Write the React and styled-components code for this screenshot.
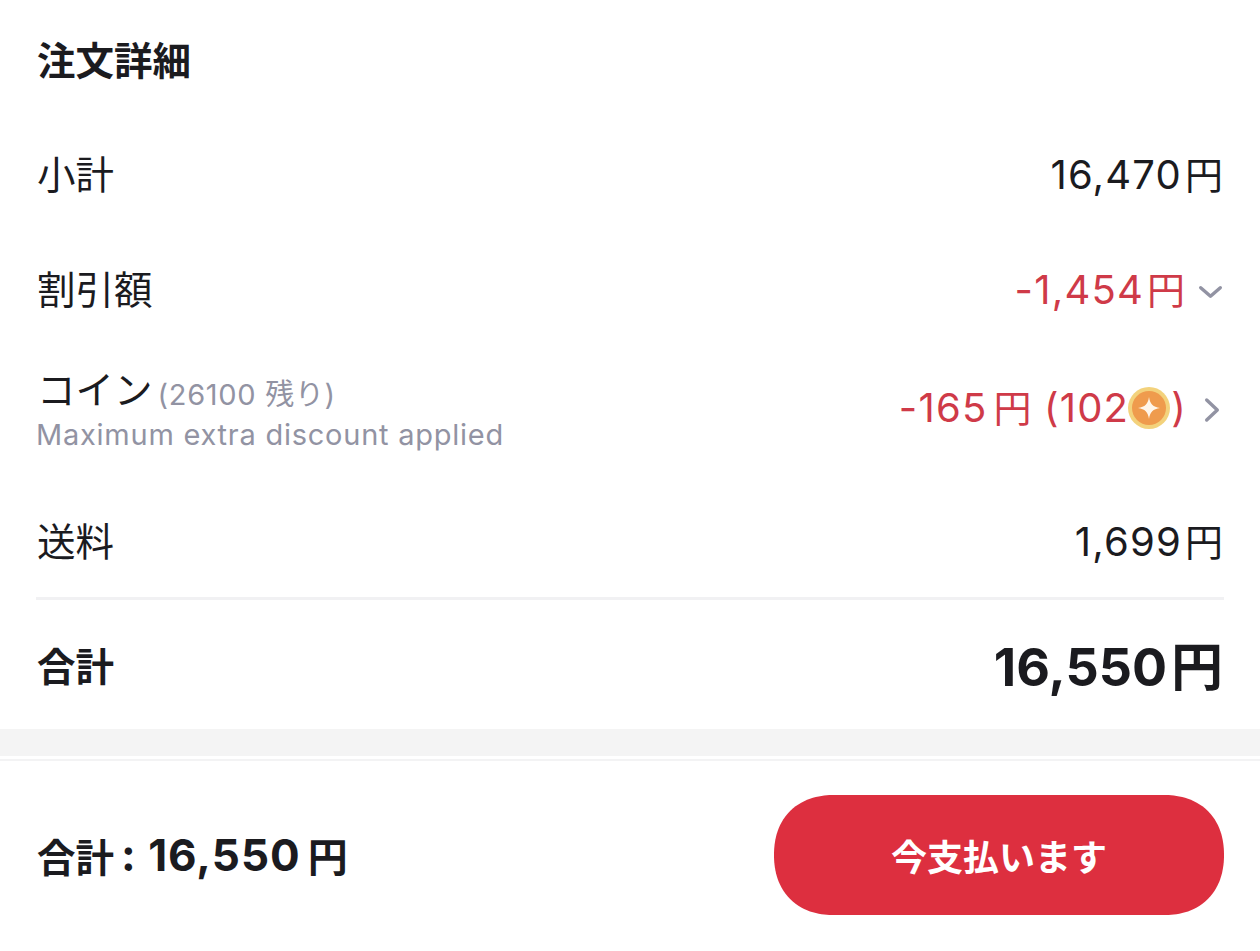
import React from 'react';
import styled, { createGlobalStyle } from 'styled-components';

const GlobalStyle = createGlobalStyle`
  html, body {
    margin: 0;
    padding: 0;
    background: #fff;
  }
  body {
    font-family: "Inter", "Noto Sans CJK JP", sans-serif;
    color: #1b1b1f;
  }
`;

const Page = styled.div`
  width: 1260px;
  height: 951px;
  overflow: hidden;
  display: flex;
  flex-direction: column;
`;

const Details = styled.section`
  height: 729px;
  padding: 0 36px;
  box-sizing: border-box;
  display: flex;
  flex-direction: column;
`;

const Title = styled.h2`
  margin: 0;
  height: 120px;
  box-sizing: border-box;
  padding: 0 0 4px 1px;
  display: flex;
  align-items: center;
  font-size: 38.5px;
  font-weight: 700;
`;

const Row = styled.div`
  height: ${({ $h }) => $h}px;
  flex: none;
  display: flex;
  align-items: center;
  justify-content: space-between;
`;

const CoinRow = styled(Row)`
  align-items: flex-start;
`;

const Label = styled.span`
  font-size: 38.5px;
  line-height: 46px;
  font-weight: 400;
  margin-bottom: 4px;
  padding-left: 1px;
`;

const Amount = styled.span`
  display: flex;
  align-items: center;
  font-size: 40px;
  line-height: 46px;
  letter-spacing: 1.2px;
  font-weight: 400;
  margin-bottom: 3px;
  color: ${({ $red }) => ($red ? '#cf3a48' : '#1b1b1f')};
  padding-right: 1px;
`;

const Yen = styled.span`
  margin-left: ${({ $gap }) => $gap ?? 3}px;
  font-size: ${({ $size }) => $size ?? 38}px;
  letter-spacing: 0;
`;

const Side = styled.span`
  display: flex;
  align-items: center;
`;

const CoinSide = styled(Side)`
  margin-top: 35px;
`;

const ChevronBox = styled.svg`
  width: 30px;
  height: 30px;
  flex: none;
  margin-left: ${({ $gap }) => $gap}px;
  fill: none;
  stroke: #9293a3;
  stroke-width: 3.4;
  stroke-linecap: round;
  stroke-linejoin: round;
`;

const CoinLabel = styled.div`
  margin-top: 17px;
  display: flex;
  flex-direction: column;
`;

const CoinTop = styled.div`
  display: flex;
  align-items: flex-start;
  height: 51px;
`;

const Balance = styled.span`
  margin: 5px 0 0 5px;
  font-size: 29px;
  line-height: 46px;
  letter-spacing: 0.7px;
  color: #9293a3;
`;

const Hint = styled.div`
  font-size: 29px;
  line-height: 34px;
  letter-spacing: 0.75px;
  color: #9293a3;
`;

const CoinIcon = styled.svg`
  width: 42px;
  height: 42px;
  flex: none;
  margin: 0 1px 0 -1px;
`;

const Divider = styled.div`
  height: 3px;
  flex: none;
  background: #f1f1f3;
`;

const TotalLabel = styled(Label)`
  font-weight: 700;
  margin: 4px 0 0;
`;

const TotalAmount = styled(Amount)`
  font-size: 52px;
  letter-spacing: 0;
  font-weight: 700;
  margin: 6px 0 0;
`;

const Band = styled.div`
  height: 27px;
  flex: none;
  background: #f4f4f4;
`;

const Footer = styled.footer`
  margin-top: 3px;
  border-top: 2px solid #f3f3f4;
  flex: 1;
  padding: 34px 36px 0 37px;
  display: flex;
  align-items: flex-start;
  justify-content: space-between;
`;

const FooterTotal = styled.div`
  height: 120px;
  display: flex;
  align-items: center;
  font-size: 44px;
  letter-spacing: 1px;
  font-weight: 700;
`;

const FooterLabel = styled.span`
  font-size: 38.5px;
  letter-spacing: 0;
  margin-right: 7px;
`;

const PayButton = styled.button`
  width: 450px;
  height: 120px;
  border: 0;
  padding: 0;
  background: #dd2f3f;
  border-radius: 60px;
  corner-shape: superellipse(1.15);
  color: #fff;
  font-family: inherit;
  font-size: 36px;
  font-weight: 700;
`;

function Chevron({ down, gap = 8 }) {
  return (
    <ChevronBox viewBox="0 0 30 30" $gap={gap}>
      {down ? <path d="M6.7 10.7 L16.5 19.3 L26.3 10.7" /> : <path d="M12.7 5 L23.3 15 L12.7 25" />}
    </ChevronBox>
  );
}

function Coin() {
  return (
    <CoinIcon viewBox="0 0 42 42">
      <circle cx="21" cy="21" r="21" fill="#f3d27c" />
      <circle cx="21" cy="21" r="17" fill="#ef9b4d" />
      <path d="M21 10 C22 17 25 20 32 21 C25 22 22 25 21 32 C20 25 17 22 10 21 C17 20 20 17 21 10 Z" fill="#fff6ea" />
    </CoinIcon>
  );
}

export default function App() {
  return (
    <Page>
      <GlobalStyle />
      <Details>
        <Title>注文詳細</Title>
        <Row $h={113}>
          <Label>小計</Label>
          <Amount>16,470<Yen>円</Yen></Amount>
        </Row>
        <Row $h={117}>
          <Label>割引額</Label>
          <Side>
            <Amount $red>-1,454<Yen>円</Yen></Amount>
            <Chevron down />
          </Side>
        </Row>
        <CoinRow $h={140}>
          <CoinLabel>
            <CoinTop>
              <Label>コイン</Label>
              <Balance>(26100 残り)</Balance>
            </CoinTop>
            <Hint>Maximum extra discount applied</Hint>
          </CoinLabel>
          <CoinSide>
            <Amount $red>-165<Yen $gap={6}>円</Yen>&nbsp;(102<Coin />)</Amount>
            <Chevron gap={6} />
          </CoinSide>
        </CoinRow>
        <Row $h={107}>
          <Label>送料</Label>
          <Amount>1,699<Yen>円</Yen></Amount>
        </Row>
        <Divider />
        <Row $h={129}>
          <TotalLabel>合計</TotalLabel>
          <TotalAmount>16,550<Yen $size={52} $gap={4}>円</Yen></TotalAmount>
        </Row>
      </Details>
      <Band />
      <Footer>
        <FooterTotal><FooterLabel>合計</FooterLabel>: 16,550<Yen $size={40} $gap={7}>円</Yen></FooterTotal>
        <PayButton>今支払います</PayButton>
      </Footer>
    </Page>
  );
}
